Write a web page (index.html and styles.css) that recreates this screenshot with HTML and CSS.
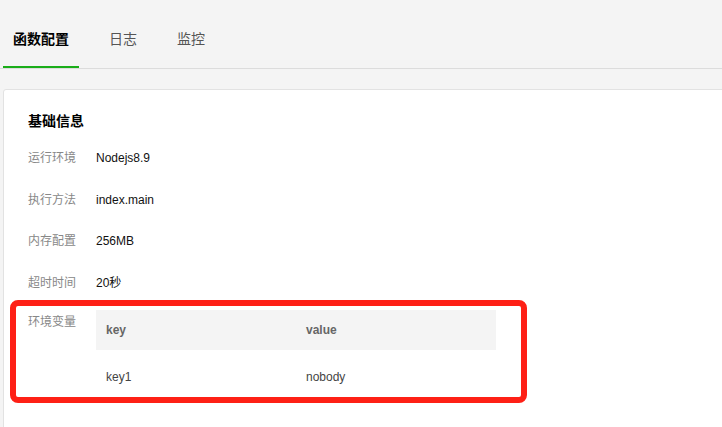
FILE: index.html
```html
<!DOCTYPE html>
<html lang="zh-CN">
<head>
<meta charset="utf-8">
<title>函数配置</title>
<link rel="stylesheet" href="styles.css">
</head>
<body>
<div class="page">
  <nav class="tabs">
    <div class="tab active">函数配置</div>
    <div class="tab">日志</div>
    <div class="tab">监控</div>
  </nav>
  <section class="card">
    <h2 class="title">基础信息</h2>
    <div class="rows">
      <div class="row"><span class="label">运行环境</span><span class="value">Nodejs8.9</span></div>
      <div class="row"><span class="label">执行方法</span><span class="value">index.main</span></div>
      <div class="row"><span class="label">内存配置</span><span class="value">256MB</span></div>
      <div class="row"><span class="label">超时时间</span><span class="value">20秒</span></div>
      <div class="row env">
        <span class="label env-label">环境变量</span>
        <table class="vars">
          <thead><tr><th>key</th><th>value</th></tr></thead>
          <tbody><tr><td>key1</td><td>nobody</td></tr></tbody>
        </table>
      </div>
    </div>
  </section>
  <div class="highlight"></div>
</div>
</body>
</html>
```

FILE: styles.css
```css
html, body {
  margin: 0;
  padding: 0;
  background: #f4f4f4;
  overflow: hidden;
}
body {
  font-family: "Liberation Sans", "Noto Sans CJK SC", sans-serif;
  font-size: 12px;
  color: #222;
}
.page {
  position: relative;
  width: 722px;
  height: 427px;
  overflow: hidden;
}
.tabs {
  display: flex;
  gap: 20px;
  padding: 29px 0 0 3px;
  border-bottom: 1px solid #dcdcdc;
}
.tab {
  font-size: 14px;
  line-height: 20px;
  padding: 0 10px 17px;
  color: #555;
  border-bottom: 2px solid transparent;
}
.tab.active {
  color: #000;
  font-weight: bold;
  border-bottom-color: #1aad19;
}
.card {
  margin: 20px -20px 0 3px;
  background: #fff;
  border: 1px solid #e2e2e2;
  border-radius: 3px;
  padding: 21px 24px 40px;
  min-height: 400px;
}
.title {
  margin: 0 0 17px;
  font-size: 14px;
  line-height: 20px;
  font-weight: bold;
  color: #000;
}
.rows {
  display: flex;
  flex-direction: column;
  gap: 21.5px;
}
.row {
  display: flex;
  line-height: 20px;
}
.row.env {
  margin-top: -4px;
}
.label {
  width: 68px;
  flex: none;
  color: #888;
}
.value {
  color: #111;
}
.env-label {
  padding-top: 2px;
}
.vars {
  width: 400px;
  border-collapse: collapse;
  table-layout: fixed;
}
.vars th, .vars td {
  text-align: left;
  padding: 0 10px;
  width: 180px;
}
.vars th {
  height: 40px;
  background: #f4f4f4;
  color: #666;
  font-weight: bold;
}
.vars td {
  height: 50px;
  padding-top: 2px;
  color: #444;
  border-bottom: 1px solid #eeeeee;
}
.highlight {
  position: absolute;
  left: 10px;
  top: 300px;
  width: 505px;
  height: 91px;
  border: 6px solid #fe2016;
  border-radius: 8px;
  pointer-events: none;
}
```
